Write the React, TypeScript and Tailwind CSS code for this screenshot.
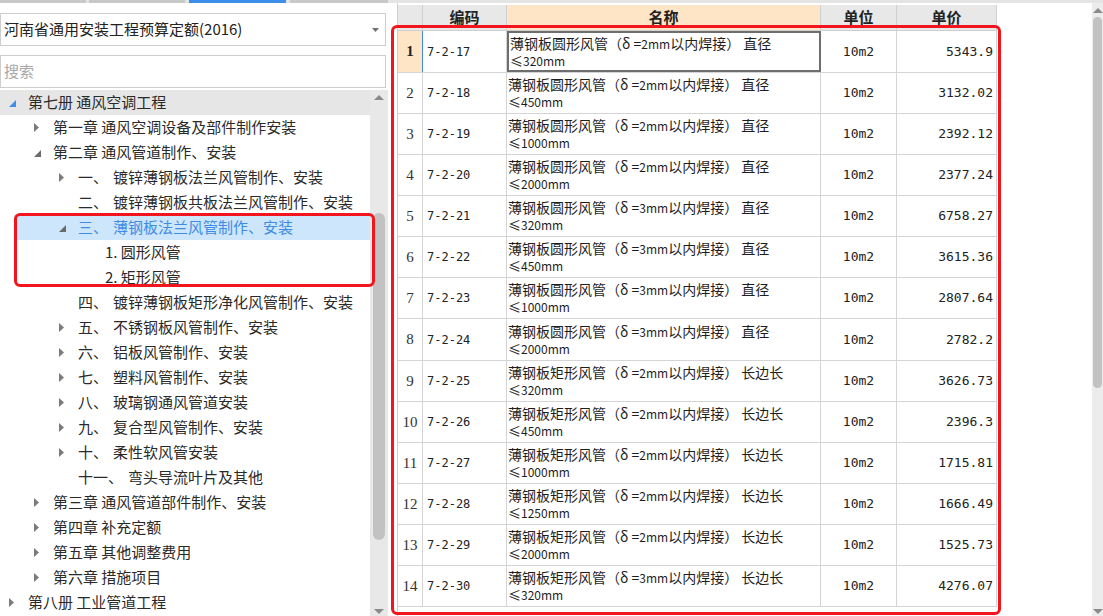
import React from 'react';

const cjk = "font-['Noto_Sans_CJK_SC',sans-serif]";
const mono = "font-['DejaVu_Sans_Mono',monospace]";
const serif = "font-['Liberation_Serif',serif]";

type Node = {
  lv: 0 | 1 | 2 | 3;
  ex?: 'open' | 'closed';
  num?: string;
  label: string;
  sel?: boolean;
  hover?: boolean;
  blue?: boolean;
};

const tree: Node[] = [
  { lv: 0, ex: 'open', blue: true, hover: true, label: '第七册 通风空调工程' },
  { lv: 1, ex: 'closed', label: '第一章 通风空调设备及部件制作安装' },
  { lv: 1, ex: 'open', label: '第二章 通风管道制作、安装' },
  { lv: 2, ex: 'closed', num: '一、', label: '镀锌薄钢板法兰风管制作、安装' },
  { lv: 2, num: '二、', label: '镀锌薄钢板共板法兰风管制作、安装' },
  { lv: 2, ex: 'open', num: '三、', label: '薄钢板法兰风管制作、安装', sel: true },
  { lv: 3, label: '1. 圆形风管' },
  { lv: 3, label: '2. 矩形风管' },
  { lv: 2, num: '四、', label: '镀锌薄钢板矩形净化风管制作、安装' },
  { lv: 2, ex: 'closed', num: '五、', label: '不锈钢板风管制作、安装' },
  { lv: 2, ex: 'closed', num: '六、', label: '铝板风管制作、安装' },
  { lv: 2, ex: 'closed', num: '七、', label: '塑料风管制作、安装' },
  { lv: 2, ex: 'closed', num: '八、', label: '玻璃钢通风管道安装' },
  { lv: 2, ex: 'closed', num: '九、', label: '复合型风管制作、安装' },
  { lv: 2, ex: 'closed', num: '十、', label: '柔性软风管安装' },
  { lv: 2, num: '十一、', label: '弯头导流叶片及其他' },
  { lv: 1, ex: 'closed', label: '第三章 通风管道部件制作、安装' },
  { lv: 1, ex: 'closed', label: '第四章 补充定额' },
  { lv: 1, ex: 'closed', label: '第五章 其他调整费用' },
  { lv: 1, ex: 'closed', label: '第六章 措施项目' },
  { lv: 0, ex: 'closed', label: '第八册 工业管道工程' },
];

const indent = ['pl-[8px]', 'pl-[33px]', 'pl-[58px]', 'pl-[105px]'];

// code, shape, thickness, dimension label, limit, price
const rows: [string, string, string, string, string, string][] = [
  ['7-2-17', '圆形', '2', '直径', '320', '5343.9'],
  ['7-2-18', '圆形', '2', '直径', '450', '3132.02'],
  ['7-2-19', '圆形', '2', '直径', '1000', '2392.12'],
  ['7-2-20', '圆形', '2', '直径', '2000', '2377.24'],
  ['7-2-21', '圆形', '3', '直径', '320', '6758.27'],
  ['7-2-22', '圆形', '3', '直径', '450', '3615.36'],
  ['7-2-23', '圆形', '3', '直径', '1000', '2807.64'],
  ['7-2-24', '圆形', '3', '直径', '2000', '2782.2'],
  ['7-2-25', '矩形', '2', '长边长', '320', '3626.73'],
  ['7-2-26', '矩形', '2', '长边长', '450', '2396.3'],
  ['7-2-27', '矩形', '2', '长边长', '1000', '1715.81'],
  ['7-2-28', '矩形', '2', '长边长', '1250', '1666.49'],
  ['7-2-29', '矩形', '2', '长边长', '2000', '1525.73'],
  ['7-2-30', '矩形', '3', '长边长', '320', '4276.07'],
];

function Caret({ ex, blue }: { ex?: 'open' | 'closed'; blue?: boolean }) {
  if (ex === 'closed')
    return (
      <svg width="5" height="9" className="ml-[1px]">
        <path d="M0 0L5 4.5L0 9Z" fill="#7b7b7b" />
      </svg>
    );
  if (ex === 'open')
    return (
      <svg width="7" height="7" className="ml-[1px] mt-[2px]">
        <path d="M7 0L7 7L0 7Z" fill={blue ? '#3f8fe6' : '#6a6a6a'} />
      </svg>
    );
  return null;
}

function TreeRow({ n }: { n: Node }) {
  return (
    <div
      className={`flex h-[25px] shrink-0 items-center ${indent[n.lv]} ${
        n.hover ? 'bg-[#e6e6e6]' : ''
      } ${n.sel ? 'bg-[linear-gradient(to_right,white_14px,#cde6fb_14px)] text-[#3d8be4]' : 'text-[#2a2a2a]'}`}
    >
      {n.lv < 3 && (
        <span className="flex w-[20px] shrink-0 items-center">
          <Caret ex={n.ex} blue={n.blue} />
        </span>
      )}
      {n.num && <span className="mr-[5px]">{n.num}</span>}
      <span className="whitespace-nowrap">{n.label}</span>
    </div>
  );
}

function ArrowUp() {
  return (
    <svg width="10" height="5">
      <path d="M0 5L5 0L10 5Z" fill="#8a8a8a" />
    </svg>
  );
}

function ArrowDown() {
  return (
    <svg width="10" height="5">
      <path d="M0 0L10 0L5 5Z" fill="#8a8a8a" />
    </svg>
  );
}

export default function App() {
  return (
    <div className={`relative flex h-[616px] w-[1103px] flex-col overflow-hidden bg-white ${cjk}`}>
      {/* tab strip */}
      <div className="flex h-[3px] shrink-0 bg-[#e4e4e4]">
        <div className="w-[86px] bg-[#c8c8c8]" />
        <div className="ml-[3px] w-[96px] bg-[#c8c8c8]" />
        <div className="ml-[4px] w-[97px] bg-[#3c8fe8]" />
        <div className="ml-[4px] w-[98px] bg-[#c8c8c8]" />
      </div>

      <div className="flex min-h-0 flex-1">
        {/* left panel */}
        <aside className="flex w-[391px] shrink-0 flex-col">
          <div className="mr-[5px] mt-[10px] flex h-[33px] items-center justify-between border border-[#cdcdcd] pl-[3px] pr-[6px] text-[15px] text-[#222]">
            <span>河南省通用安装工程预算定额(2016)</span>
            <svg width="7" height="4">
              <path d="M0 0L7 0L3.5 4Z" fill="#707070" />
            </svg>
          </div>
          <div className="mr-[5px] mt-[9px] flex h-[33px] items-center border border-[#cdcdcd] pl-[3px] text-[15px] text-[#a8a8a8]">
            搜索
          </div>
          <div className="mt-[2px] flex min-h-0 flex-1">
            <div className="flex w-[370px] flex-col overflow-hidden text-[15px]">
              {tree.map((n, i) => (
                <TreeRow key={i} n={n} />
              ))}
            </div>
            <div className="flex w-[18px] flex-col items-center bg-[#e8e8e8] pt-[5px]">
              <ArrowUp />
              <div className="mt-[113px] h-[327px] w-[12px] rounded-full bg-[#c2c2c2]" />
              <div className="mt-auto pb-[2px]">
                <ArrowDown />
              </div>
            </div>
          </div>
        </aside>

        {/* table */}
        <main className="flex min-w-0 flex-1 pl-[6px]">
          <div className="flex w-[600px] shrink-0 flex-col border-l border-[#d0d0d0]">
            <div className="grid h-[28px] shrink-0 grid-cols-[25px_84px_314px_76px_100px] border-b border-[#cfcfcf] pt-[2px] text-[15px] font-bold text-[#222]">
              <div className="border-r border-[#d0d0d0] bg-[#e8e8e8]" />
              <div className="flex items-center justify-center border-r border-[#d0d0d0] bg-[#e8e8e8]">编码</div>
              <div className="flex items-center justify-center border-r border-[#d0d0d0] bg-[#fde5c6]">名称</div>
              <div className="flex items-center justify-center border-r border-[#d0d0d0] bg-[#e8e8e8]">单位</div>
              <div className="flex items-center justify-center border-r border-[#d0d0d0] bg-[#e8e8e8]">单价</div>
            </div>
            {rows.map(([code, shape, t, dim, lim, price], i) => {
              const first = i === 0;
              return (
                <div
                  key={code}
                  className={`grid shrink-0 grid-cols-[25px_84px_314px_76px_100px] border-b border-[#d4d4d4] ${
                    i === 0 || i === 7 ? 'h-[42px]' : 'h-[41px]'
                  }`}
                >
                  <div
                    className={`flex items-center justify-center border-r ${serif} text-[15px] ${
                      first ? 'border-[#3b8ae6] bg-[#fde5c6] font-bold text-[#222]' : 'border-[#d4d4d4] text-[#333]'
                    }`}
                  >
                    {i + 1}
                  </div>
                  <div className={`flex items-center border-r border-[#d4d4d4] pl-[4px] ${mono} text-[12px] text-[#222]`}>
                    {code}
                  </div>
                  <div
                    className={`flex flex-col justify-center pl-[1px] text-[14px] leading-[17px] text-[#1e1e1e] ${
                      first ? 'border-2 border-[#6e6e6e]' : 'border-r border-[#d4d4d4]'
                    }`}
                  >
                    <span className="whitespace-nowrap">
                      薄钢板{shape}风管（δ =<span className="text-[12px]">{t}mm</span>以内焊接） {dim}
                    </span>
                    <span className="whitespace-nowrap text-[13px]">
                      ≤<span className="text-[12px]">{lim}mm</span>
                    </span>
                  </div>
                  <div className={`flex items-center justify-center border-r border-[#d4d4d4] ${mono} text-[13px] text-[#222]`}>
                    10m2
                  </div>
                  <div className={`flex items-center justify-end border-r border-[#d4d4d4] pr-[3px] ${mono} text-[13px] text-[#222]`}>
                    {price}
                  </div>
                </div>
              );
            })}
          </div>
        </main>

        {/* right scrollbar */}
        <div className="flex w-[11px] shrink-0 flex-col items-center bg-[#ececec] pt-[5px]">
          <ArrowUp />
          <div className="mt-[4px] h-[371px] w-[9px] rounded-full bg-[#c2c2c2]" />
          <div className="mt-auto pb-[2px]">
            <ArrowDown />
          </div>
        </div>
      </div>

      {/* annotation boxes */}
      <div className="pointer-events-none absolute left-[14px] top-[213px] h-[74px] w-[361px] rounded-[6px] border-[3px] border-[#f2151d]" />
      <div className="pointer-events-none absolute left-[391px] top-[25px] h-[590px] w-[610px] rounded-[6px] border-[3px] border-[#f2151d]" />
    </div>
  );
}
